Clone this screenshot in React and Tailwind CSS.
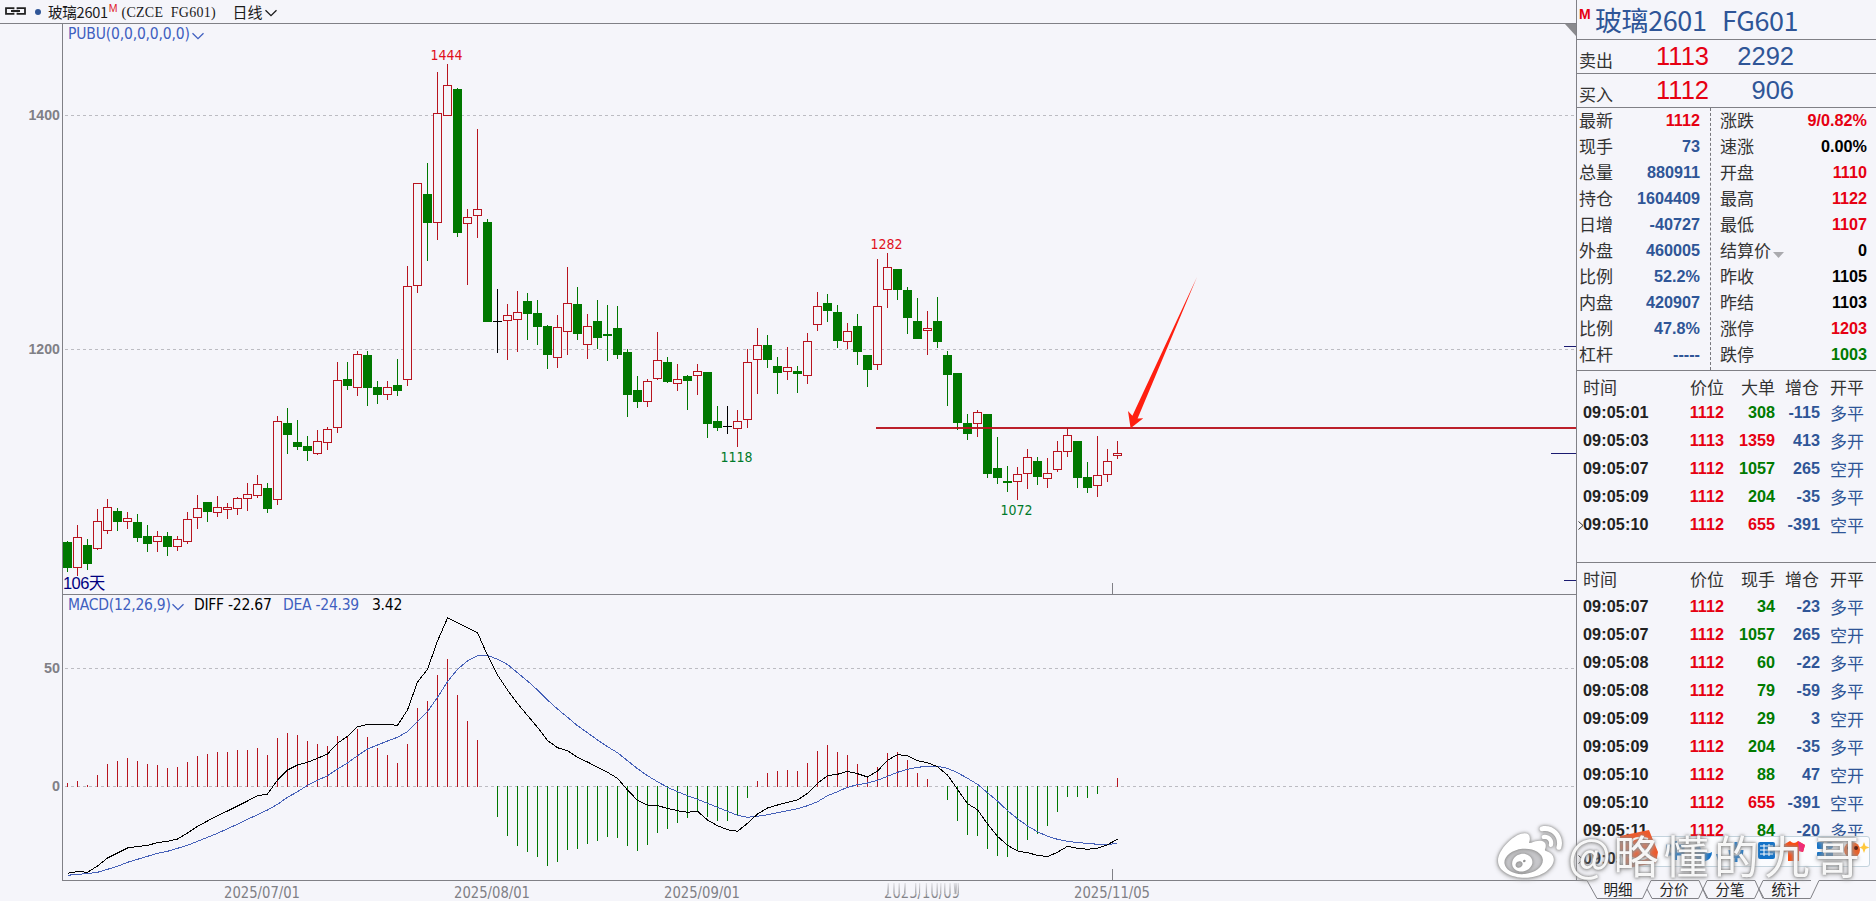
// ============================================================
// Futures terminal: daily candles + MACD on the left,
// quote board and tick lists on the right
// ============================================================
import { FaWeibo } from 'react-icons/fa'

const UP = '#b8141f'
const DOWN = '#007800'
const GRAY = '#808086'
const BG = '#f5f5fa'

// [kind, high, body top, body bottom, low] in chart pixels, one every 10px
const CANDLES = [
  ['g', 541, 542, 568, 572], ['r', 525, 537, 568, 576], ['g', 539, 545, 564, 570], ['r', 509, 521, 549, 550],
  ['r', 499, 507, 531, 534], ['g', 508, 511, 522, 531], ['r', 512, 518, 522, 529], ['g', 514, 522, 538, 542],
  ['g', 525, 536, 544, 552], ['r', 531, 536, 542, 552], ['g', 532, 536, 547, 556], ['r', 536, 539, 547, 551],
  ['r', 512, 519, 542, 544], ['r', 495, 508, 518, 529], ['g', 502, 502, 512, 522], ['r', 496, 507, 513, 517],
  ['r', 503, 507, 510, 519], ['r', 497, 498, 509, 515], ['r', 483, 494, 499, 511], ['r', 475, 484, 496, 498],
  ['g', 483, 488, 509, 513], ['r', 416, 421, 500, 505], ['g', 408, 423, 435, 454], ['g', 420, 442, 447, 450],
  ['g', 436, 446, 451, 461], ['r', 430, 441, 454, 455], ['r', 427, 429, 443, 450], ['r', 362, 380, 428, 433],
  ['g', 362, 379, 386, 390], ['r', 351, 354, 388, 396], ['g', 351, 355, 388, 406], ['g', 381, 387, 395, 404],
  ['r', 381, 387, 395, 400], ['g', 359, 385, 391, 396], ['r', 266, 286, 380, 386], ['r', 183, 183, 286, 293],
  ['g', 163, 194, 223, 261], ['r', 72, 113, 223, 240], ['r', 64, 85, 116, 116], ['g', 88, 89, 233, 237],
  ['r', 209, 217, 224, 285], ['r', 129, 209, 216, 238], ['g', 219, 222, 322, 322], ['k', 289, 321, 322, 353],
  ['r', 304, 315, 321, 360], ['r', 291, 312, 320, 352], ['g', 293, 301, 314, 340], ['g', 300, 313, 327, 345],
  ['g', 325, 326, 355, 369], ['r', 315, 327, 358, 368], ['r', 267, 303, 332, 355], ['g', 287, 304, 334, 340],
  ['r', 314, 326, 345, 359], ['g', 300, 321, 338, 349], ['g', 305, 334, 336, 361], ['g', 306, 328, 355, 359],
  ['g', 349, 352, 395, 417], ['g', 376, 390, 402, 408], ['r', 379, 381, 402, 407], ['r', 332, 360, 379, 380],
  ['g', 357, 362, 382, 383], ['r', 364, 379, 384, 391], ['g', 375, 376, 381, 410], ['r', 364, 371, 376, 395],
  ['g', 372, 372, 424, 438], ['g', 406, 421, 428, 431], ['k', 406, 426, 427, 434], ['r', 410, 421, 429, 447],
  ['r', 349, 362, 420, 428], ['r', 328, 345, 360, 394], ['g', 335, 345, 360, 368], ['g', 357, 366, 373, 394],
  ['r', 347, 367, 372, 380], ['g', 366, 371, 374, 393], ['r', 333, 341, 376, 384], ['r', 292, 306, 325, 331],
  ['g', 294, 303, 311, 322], ['g', 305, 312, 341, 348], ['r', 323, 331, 342, 349], ['g', 314, 326, 352, 365],
  ['g', 355, 355, 370, 387], ['r', 259, 306, 365, 370], ['r', 253, 267, 290, 308], ['g', 269, 269, 290, 300],
  ['g', 287, 290, 318, 334], ['g', 298, 321, 339, 339], ['r', 311, 328, 331, 355], ['g', 297, 321, 342, 348],
  ['g', 351, 355, 375, 406], ['g', 373, 373, 423, 430], ['g', 414, 423, 434, 440], ['r', 410, 412, 424, 437],
  ['g', 414, 414, 474, 478], ['g', 437, 468, 478, 484], ['g', 466, 481, 483, 492], ['r', 467, 474, 482, 500],
  ['r', 449, 457, 474, 489], ['g', 457, 461, 477, 485], ['r', 458, 473, 479, 488], ['r', 441, 451, 470, 472],
  ['r', 428, 435, 452, 457], ['g', 441, 441, 478, 488], ['g', 462, 477, 488, 493], ['r', 436, 475, 486, 497],
  ['r', 449, 461, 475, 482], ['r', 441, 453, 456, 459],
]

// far end of every MACD bar, 786 is the zero line
const ZERO = 786
const BARS = [
  783, 781, 785, 775, 764, 761, 758, 761, 764, 765, 768, 767, 762, 756, 754, 752, 752, 750, 750, 748, 755, 738, 733,
  735, 741, 744, 746, 736, 736, 729, 737, 748, 755, 763, 744, 708, 701, 675, 659, 695, 721, 740, 786, 817, 836, 846,
  852, 857, 866, 862, 850, 849, 844, 841, 837, 838, 846, 851, 845, 833, 829, 823, 818, 812, 817, 821, 821, 816, 798,
  781, 773, 771, 770, 771, 763, 751, 745, 752, 755, 764, 777, 767, 753, 752, 760, 773, 779, 786, 800, 821, 835, 836,
  849, 856, 857, 851, 840, 834, 826, 812, 797, 797, 798, 794, 786, 778,
]

const DIFF = [
  873.3, 871.5, 872.3, 866, 858, 853, 848, 846.5, 845.3, 842.7, 841.3, 839, 833, 826.3, 821, 815.7, 811, 806, 801,
  795.7, 794, 780, 770, 765, 762.3, 758.3, 754, 743.3, 736.3, 726.7, 724.5, 724.5, 724.5, 725.3, 710, 682, 669.3, 641,
  618, 622.7, 627.7, 632.7, 655.3, 675, 690, 703.5, 715.5, 727.3, 740.5, 747.7, 750.7, 757.3, 762, 767.3, 772.3, 778.3,
  790, 800.3, 805, 805.7, 808.3, 810.7, 812.3, 811.3, 820, 825.7, 829.7, 831.3, 823.3, 814, 808, 805, 802.3, 800,
  793.3, 783.3, 775.7, 774.3, 771.3, 773.7, 777, 771, 760.3, 754.7, 755.7, 760.7, 762.7, 766.7, 775, 789.3, 803.7,
  809.7, 824, 836.3, 845.3, 851, 852.7, 855.3, 856.7, 852.3, 846.3, 848.3, 849.3, 848.3, 844.7, 839.3,
]

const DEA = [
  875.3, 874.3, 873.7, 872.3, 869.3, 866.3, 862.3, 859.3, 856.3, 853.3, 851.3, 848.3, 845.3, 841.3, 837.3, 833.3,
  828.7, 824.3, 819.3, 814.7, 810, 804.3, 797.3, 791.7, 785.3, 780.3, 775.7, 769, 763, 755.7, 749, 745, 741, 737.3,
  731.7, 721.7, 711.7, 697.3, 681.7, 669.3, 661, 655.7, 655.3, 659.3, 664.5, 672.7, 681, 690, 700, 709, 717.3, 725.7,
  732.7, 740, 746.7, 752.7, 760.7, 768.7, 775.7, 781.7, 787.3, 791.7, 795.7, 799.3, 803.3, 807.3, 811.3, 815.3,
  817.3, 816.3, 814.7, 812.7, 810.7, 808.7, 805.7, 801.7, 795.7, 791.7, 787.3, 784.7, 783, 780.3, 776.3, 772.3,
  769.3, 767.3, 766.3, 766.3, 768.3, 772.7, 778.3, 784.3, 792.7, 801, 810.7, 818.7, 826, 831.7, 836.3, 839.3, 841.3,
  842.7, 843.3, 844.3, 844.3, 843.7,
]

const RED = 'text-[#e60012]'
const BLUE = 'text-[#2f5597]'
const GREEN = 'text-[#007a00]'
const BLACK = 'text-black'

const STATS = [
  ['最新', '1112', RED, '涨跌', '9/0.82%', RED],
  ['现手', '73', BLUE, '速涨', '0.00%', BLACK],
  ['总量', '880911', BLUE, '开盘', '1110', RED],
  ['持仓', '1604409', BLUE, '最高', '1122', RED],
  ['日增', '-40727', BLUE, '最低', '1107', RED],
  ['外盘', '460005', BLUE, '结算价', '0', BLACK],
  ['比例', '52.2%', BLUE, '昨收', '1105', BLACK],
  ['内盘', '420907', BLUE, '昨结', '1103', BLACK],
  ['比例', '47.8%', BLUE, '涨停', '1203', RED],
  ['杠杆', '-----', BLUE, '跌停', '1003', GREEN],
]

const BIG_ORDERS = [
  ['09:05:01', '1112', '308', GREEN, '-115', '多平'],
  ['09:05:03', '1113', '1359', RED, '413', '多开'],
  ['09:05:07', '1112', '1057', GREEN, '265', '空开'],
  ['09:05:09', '1112', '204', GREEN, '-35', '多平'],
  ['09:05:10', '1112', '655', RED, '-391', '空平'],
]

const TICKS = [
  ['09:05:07', '1112', '34', GREEN, '-23', '多平'],
  ['09:05:07', '1112', '1057', GREEN, '265', '空开'],
  ['09:05:08', '1112', '60', GREEN, '-22', '多平'],
  ['09:05:08', '1112', '79', GREEN, '-59', '多平'],
  ['09:05:09', '1112', '29', GREEN, '3', '空开'],
  ['09:05:09', '1112', '204', GREEN, '-35', '多平'],
  ['09:05:10', '1112', '88', GREEN, '47', '空开'],
  ['09:05:10', '1112', '655', RED, '-391', '空平'],
  ['09:05:11', '1112', '84', GREEN, '-20', '多平'],
  ['09:05:', '', '', GREEN, '', ''],
]

const TAHOMA = "'DejaVu Sans Condensed', 'Noto Sans', sans-serif"
const ARIAL = "'Liberation Sans', Arial, sans-serif"

const cx = (i) => 67 + i * 10

function Label({ x, y, w, size = 15, fill, bold, font = TAHOMA, children, ...rest }) {
  return (
    <text x={x} y={y} textLength={w} lengthAdjust="spacingAndGlyphs" fontSize={size} fill={fill}
      fontWeight={bold ? 700 : 400} fontFamily={font} {...rest}>{children}</text>
  )
}

function Grid({ y }) {
  return <line x1="65" x2="1576" y1={y + 0.5} y2={y + 0.5} stroke="#bcbcc2" strokeDasharray="3 3" shapeRendering="crispEdges" />
}

function Candle({ i, data }) {
  const [kind, high, top, bottom, low] = data
  const x = cx(i)
  const color = kind === 'r' ? UP : kind === 'g' ? DOWN : '#000'
  return (
    <g fill={color}>
      <rect x={x} y={high} width="1" height={top - high} />
      <rect x={x} y={bottom} width="1" height={low - bottom} />
      {kind === 'r'
        ? <rect x={x - 3.5} y={top + 0.5} width="8" height={bottom - top - 1} fill={BG} stroke={color} />
        : <rect x={x - 4} y={top} width="9" height={bottom - top} />}
    </g>
  )
}

function Chevron({ className, w = 12 }) {
  return (
    <svg className={className} width={w} height="8" viewBox="0 0 12 8" fill="none" stroke="currentColor" strokeWidth="1.3">
      <path d="M0.5 1.2 6 6.7 11.5 1.2" />
    </svg>
  )
}

function TopBar() {
  return (
    <div className="flex h-[23px] shrink-0 items-center leading-none text-[#1a1a1a]">
      <svg className="ml-[5px]" width="21" height="9" viewBox="0 0 21 9" fill="none" stroke="#222" strokeWidth="1.8">
        <path d="M8.5 2.2V1.2H1v5.6h7.5V5.8M12.5 2.2V1.2H20v5.6h-7.5V5.8M6 4h9" />
      </svg>
      <span className="ml-[9px] size-[6px] rounded-full bg-[#2f5597]" />
      <span className="ml-[7px] mt-[1px] font-['Noto_Sans_CJK_SC',sans-serif] text-[14.6px] tracking-[-0.3px]">玻璃2601</span>
      <span className="ml-[1px] -mt-[6px] text-[10.5px] text-[#e0202c] font-['Liberation_Sans',sans-serif]">M</span>
      <span className="ml-[4px] mt-[2px] w-[94px] whitespace-pre font-['Liberation_Serif',serif] text-[14px] tracking-[0.25px]">(CZCE  FG601)</span>
      <span className="ml-[17px] font-['Noto_Sans_CJK_SC',sans-serif] text-[15px]">日线</span>
      <Chevron className="ml-[2px] mt-[2px]" />
    </div>
  )
}

function PricePane() {
  return (
    <div className="relative h-[571px] shrink-0">
      <svg className="block" width="1576" height="571" viewBox="0 23 1576 571">
        <Grid y={115} />
        <Grid y={349} />
        <g shapeRendering="crispEdges">
          <rect x="0" y="23" width="1576" height="1" fill={GRAY} />
          <rect x="62" y="23" width="1" height="571" fill={GRAY} />
          {CANDLES.map((c, i) => <Candle key={i} i={i} data={c} />)}
          <rect x="876" y="427" width="700" height="2" fill={UP} fillOpacity="0.95" />
          <rect x="1564" y="346" width="12" height="1" fill="#1a1a70" />
          <rect x="1551" y="453" width="25" height="1" fill="#1a1a70" />
          <rect x="1564" y="580" width="12" height="1" fill="#1a1a70" />
          <rect x="1112" y="583" width="1" height="11" fill={GRAY} />
        </g>
        <path d="M1197 277 1137.6 418.6 1143.3 418.2 1130.6 428.2 1128 411 1132.4 415.8Z" fill="#ff1f10" />
        <path d="M1565 24h11v12z" fill="#8a8a8e" />
        <Label x="28.5" y="119.6" w="31.5" fill={GRAY} bold font={ARIAL}>1400</Label>
        <Label x="28.5" y="353.6" w="31.5" fill={GRAY} bold font={ARIAL}>1200</Label>
        <Label x="430.5" y="60" w="32" size={14.5} fill="#e0101c">1444</Label>
        <Label x="870.5" y="249" w="32" size={14.5} fill="#e0101c">1282</Label>
        <Label x="720.5" y="462" w="32" size={14.5} fill="#007a2a">1118</Label>
        <Label x="1000.5" y="515" w="32" size={14.5} fill="#007a2a">1072</Label>
      </svg>
      <div className="absolute left-[68px] top-[2px] flex items-center text-[#3f5fc0]">
        <span className="font-['DejaVu_Sans_Condensed',sans-serif] text-[15.5px] leading-[18px] tracking-[-0.17px]">PUBU(0,0,0,0,0,0)</span>
        <Chevron className="ml-[2px] mt-[4px]" />
      </div>
      <div className="absolute bottom-px left-[63px] font-['Liberation_Sans','Noto_Sans_CJK_SC',sans-serif] text-[16.5px] leading-[20px] tracking-[-0.6px] text-[#000080]">106天</div>
    </div>
  )
}

function MacdPane() {
  const line = (vals) => vals.map((y, i) => `${cx(i) + 0.5},${y}`).join(' ')
  return (
    <div className="relative h-[287px] shrink-0">
      <svg className="block" width="1576" height="287" viewBox="0 594 1576 287">
        <Grid y={668} />
        <Grid y={ZERO} />
        <g shapeRendering="crispEdges">
          <rect x="62" y="594" width="1514" height="1" fill={GRAY} />
          <rect x="62" y="594" width="1" height="287" fill={GRAY} />
          <rect x="62" y="880" width="1514" height="1" fill={GRAY} />
          <rect x="1112" y="869" width="1" height="11" fill={GRAY} />
          {BARS.map((y, i) => y < ZERO
            ? <rect key={i} x={cx(i)} y={y} width="1" height={ZERO + 1 - y} fill="#b8141f" />
            : y > ZERO && <rect key={i} x={cx(i)} y={ZERO} width="1" height={y - ZERO} fill="#007800" />)}
          <polyline points={line(DEA)} fill="none" stroke="#4560b8" />
          <polyline points={line(DIFF)} fill="none" stroke="#000" />
        </g>
        <Label x="44" y="672.6" w="16" fill={GRAY} bold font={ARIAL}>50</Label>
        <Label x="52" y="790.6" w="8" fill={GRAY} bold font={ARIAL}>0</Label>
      </svg>
      <div className="absolute left-[68px] top-[2px] flex items-center font-['DejaVu_Sans_Condensed',sans-serif] text-[15.5px] leading-[18px] tracking-[-0.25px]">
        <span className="w-[103px] text-[#3f5fc0]">MACD(12,26,9)</span>
        <Chevron className="ml-[1px] mt-[4px] text-[#3f5fc0]" />
        <span className="ml-[10px] w-[89px]">DIFF -22.67</span>
        <span className="w-[89px] text-[#3f5fc0]">DEA -24.39</span>
        <span>3.42</span>
      </div>
    </div>
  )
}

function DateAxis() {
  return (
    <svg className="block shrink-0" width="1576" height="20" viewBox="0 881 1576 20">
      <defs>
        <clipPath id="lowerHalf"><rect x="880" y="893.5" width="90" height="8" /></clipPath>
        <clipPath id="upperHalf"><rect x="880" y="883" width="90" height="10.5" /></clipPath>
        <linearGradient id="fade" x1="0" y1="0" x2="0" y2="1">
          <stop offset="0" stopColor={BG} stopOpacity="0.9" />
          <stop offset="1" stopColor={BG} stopOpacity="0" />
        </linearGradient>
      </defs>
      <Label x="224" y="898" w="76" fill={GRAY}>2025/07/01</Label>
      <Label x="454" y="898" w="76" fill={GRAY}>2025/08/01</Label>
      <Label x="664" y="898" w="76" fill={GRAY}>2025/09/01</Label>
      {/* this date is half swallowed: the top of it is drawn out upwards and fades */}
      <g clipPath="url(#lowerHalf)">
        <Label x="884" y="898" w="76" fill={GRAY}>2025/10/09</Label>
      </g>
      <g clipPath="url(#upperHalf)">
        <g transform="translate(0 893.5) scale(1 20) translate(0 -894.2)">
          <Label x="884" y="898" w="76" fill={GRAY} aria-hidden="true">2025/10/09</Label>
        </g>
      </g>
      <rect x="880" y="882" width="90" height="16" fill="url(#fade)" />
      <Label x="1074" y="898" w="76" fill={GRAY}>2025/11/05</Label>
    </svg>
  )
}

function QuoteRow({ label, price, volume }) {
  return (
    <div className="flex h-[34px] items-center border-b border-[#808086] pl-[2px]">
      <span className="mt-[6px] w-[34px] text-[17px] text-[#333]">{label}</span>
      <span className={`mt-px w-[96px] text-right font-['Liberation_Sans',sans-serif] text-[25.5px] ${RED}`}>{price}</span>
      <span className={`mt-px w-[85px] text-right font-['Liberation_Sans',sans-serif] text-[25.5px] ${BLUE}`}>{volume}</span>
    </div>
  )
}

const NUM = "-mt-px font-['Liberation_Sans',sans-serif] text-[16.2px] font-bold text-right"

function TickRow({ row, active }) {
  const [time, price, vol, volColor, oi, side] = row
  return (
    <div className="relative grid h-[28px] grid-cols-[80px_61px_51px_45px_44px] items-center pl-[6px]">
      {active && (
        <svg className="absolute left-[1px] top-[10px]" width="6" height="9" viewBox="0 0 6 9" fill="none" stroke="#333">
          <path d="M.5.5 5 4.5.5 8.5" />
        </svg>
      )}
      <span className="-mt-[2px] font-['Liberation_Sans',sans-serif] text-[16.2px] font-bold tracking-[0.1px] text-[#222]">{time}</span>
      <span className={`${NUM} ${RED}`}>{price}</span>
      <span className={`${NUM} ${volColor}`}>{vol}</span>
      <span className={`${NUM} ${BLUE}`}>{oi}</span>
      <span className={`-mt-[2px] pl-[10px] text-[17px] ${BLUE}`}>{side}</span>
    </div>
  )
}

function TickHead({ volume }) {
  return (
    <div className="grid h-[26px] grid-cols-[80px_61px_51px_44px_45px] items-center pl-[6px] text-right text-[17px] text-[#333]">
      <span className="text-left">时间</span>
      <span>价位</span>
      <span>{volume}</span>
      <span>增仓</span>
      <span>开平</span>
    </div>
  )
}

function Sidebar() {
  return (
    <aside className="flex h-[880px] flex-col border-l border-[#808086] font-['Noto_Sans_CJK_SC',sans-serif] leading-none">
      <div className="flex h-[40px] shrink-0 items-center border-b border-[#808086] pl-[2px]">
        <span className={`-mt-[12px] w-[16px] font-['Liberation_Sans',sans-serif] text-[14px] font-bold ${RED}`}>M</span>
        <span className={`w-[127px] text-[27px] tracking-[-0.4px] ${BLUE}`}>玻璃2601</span>
        <span className={`text-[27px] tracking-[-0.4px] ${BLUE}`}>FG601</span>
      </div>
      <QuoteRow label="卖出" price="1113" volume="2292" />
      <QuoteRow label="买入" price="1112" volume="906" />

      {/* quote board */}
      <div className="flex h-[263px] shrink-0 border-b border-[#808086]">
        <div className="w-[134px] border-r border-dashed border-[#77777c] pl-[2px] pr-[10px]">
          {STATS.map(([label, value, color], i) => (
            <div key={i} className="flex h-[26px] items-center justify-between">
              <span className="-mt-[3px] text-[17px] text-[#333]">{label}</span>
              <span className={`${NUM} ${color}`}>{value}</span>
            </div>
          ))}
        </div>
        <div className="flex-1 pl-[9px] pr-[9px]">
          {STATS.map(([, , , label, value, color]) => (
            <div key={label} className="flex h-[26px] items-center">
              <span className="-mt-[3px] text-[17px] text-[#333]">{label}</span>
              {label === '结算价' && (
                <svg className="ml-[2px] mt-[8px]" width="11" height="6" viewBox="0 0 11 6"><path d="M0 0h11L5.5 6z" fill="#aaaaae" /></svg>
              )}
              <span className={`ml-auto ${NUM} ${color}`}>{value}</span>
            </div>
          ))}
        </div>
      </div>

      {/* large orders */}
      <div className="h-[192px] shrink-0 border-b border-[#808086] pt-[2px]">
        <TickHead volume="大单" />
        {BIG_ORDERS.map((r, i) => <TickRow key={i} row={r} active={i === 4} />)}
      </div>

      {/* every tick */}
      <div className="flex-1 overflow-hidden pt-[2px]">
        <TickHead volume="现手" />
        <div className="pt-[2px]">
          {TICKS.map((r, i) => <TickRow key={i} row={r} active={i === 9} />)}
        </div>
      </div>
    </aside>
  )
}

function Tabs() {
  return (
    <div className="relative h-[21px] font-['Noto_Sans_CJK_SC',sans-serif] text-[14.5px] leading-[17px] text-[#222]">
      <svg className="absolute left-0 top-0" width="300" height="21" viewBox="1576 880 300 21" fill="none" stroke={GRAY}>
        <path d="M1576 880.5H1587L1597 898.5H1642.5L1651 880.5H1699L1707 898.5M1647 889L1652 898.5H1698.5L1707 880.5H1755L1763 898.5M1703 889L1708 898.5H1754.5L1763 880.5H1811M1759 889L1764 898.5H1810.5L1819 880.5H1876" />
      </svg>
      <div className="relative grid grid-cols-[56px_56px_56px_56px] pl-[14px] text-center">
        {['明细', '分价', '分笔', '统计'].map((t) => <span key={t}>{t}</span>)}
      </div>
    </div>
  )
}

// floating input-method toolbar
function ImeBar() {
  return (
    <div className="absolute left-[1620px] top-[830px] flex h-[38px] w-[250px] items-center">
      <div className="absolute inset-x-0 top-[6px] h-[31px] rounded-[3px] border border-[#c3d3dd] bg-[#fbfcff]" />
      <svg className="relative" width="250" height="38" viewBox="0 0 250 38">
        <path d="M0 6 29 0 33 10 38 22 36 33 6 38 3 28 0 20Z" fill="#ee5a2c" />
        <path d="M28 9C18 6 10 9 12 14s18 4 17 10-12 7-20 3" fill="none" stroke="#fff" strokeWidth="2" />
        <g fill="none" stroke="#1272c8" strokeWidth="3">
          <path d="M48 16h15v8H48zM55.5 11v19" />
          <path d="M116 12v11M110 20q0 7 6 7t6-7M116 27v5" />
        </g>
        <path d="M80 14a9 9 0 1 0 12 8 8 8 0 0 1-12-8zM96 24h5l-3 7z" fill="#1272c8" />
        <rect x="138" y="12" width="17" height="17" rx="2" fill="#1272c8" />
        <path d="M140 16h13M140 20h13M140 24h13M144 14v12M149 14v12" stroke="#fff" />
        <path d="m163 15 7-4q4 4 8 0l7 4-2 7-4-1v10h-11V21l-4 1z" fill="#fb4a10" />
        <path d="M178 11l7 4-2 7-4-1z" fill="#f02a78" />
        <g fill="#1272c8">
          <rect x="197" y="12" width="7" height="7" rx="1" /><rect x="206" y="12" width="7" height="7" rx="3" />
          <rect x="197" y="22" width="7" height="7" rx="1" /><rect x="206" y="22" width="7" height="7" rx="1" />
        </g>
        <circle cx="232" cy="20" r="8" fill="#e8622a" />
        <circle cx="229" cy="18" r="2" fill="#5a1c10" /><circle cx="236" cy="18" r="2" fill="#5a1c10" />
        <path d="m244 12 1.5 4 4 1.5-4 1.5-1.5 4-1.5-4-3-1.5 3-1.5z" fill="#ffc83c" />
      </svg>
    </div>
  )
}

function Watermark() {
  return (
    <div className="pointer-events-none absolute left-[1498px] top-[820px] flex h-[80px] w-[374px]">
      <svg className="absolute left-0 top-0" width="70" height="64" viewBox="0 0 70 64">
        <ellipse cx="27" cy="42" rx="22" ry="15" fill="#c9c9cd" />
      </svg>
      <FaWeibo className="relative mt-[2px] shrink-0 text-[64px] text-white [filter:drop-shadow(0_0_1.5px_#888)_drop-shadow(0_1px_2px_#aaa)]" />
      <svg className="absolute left-[70px] top-0" width="304" height="80" viewBox="1568 820 304 80"
        fontFamily="'Noto Sans CJK SC', sans-serif" fontSize="45" fill="#fff" fillOpacity="0.93"
        style={{ filter: 'drop-shadow(0 0 1.5px #777) drop-shadow(0 1px 2px #aaa)' }}>
        <text x="1568" y="872" textLength="43" lengthAdjust="spacingAndGlyphs">@</text>
        <text x="1613.5" y="874" letterSpacing="5.3">略懂的九哥</text>
      </svg>
    </div>
  )
}

export default function App() {
  return (
    <div className="relative flex h-[901px] w-[1876px] overflow-hidden bg-[#f5f5fa]">
      <main className="flex w-[1576px] shrink-0 flex-col">
        <TopBar />
        <PricePane />
        <MacdPane />
        <DateAxis />
      </main>
      <div className="flex w-[300px] shrink-0 flex-col">
        <Sidebar />
        <Tabs />
      </div>
      <ImeBar />
      <Watermark />
    </div>
  )
}
